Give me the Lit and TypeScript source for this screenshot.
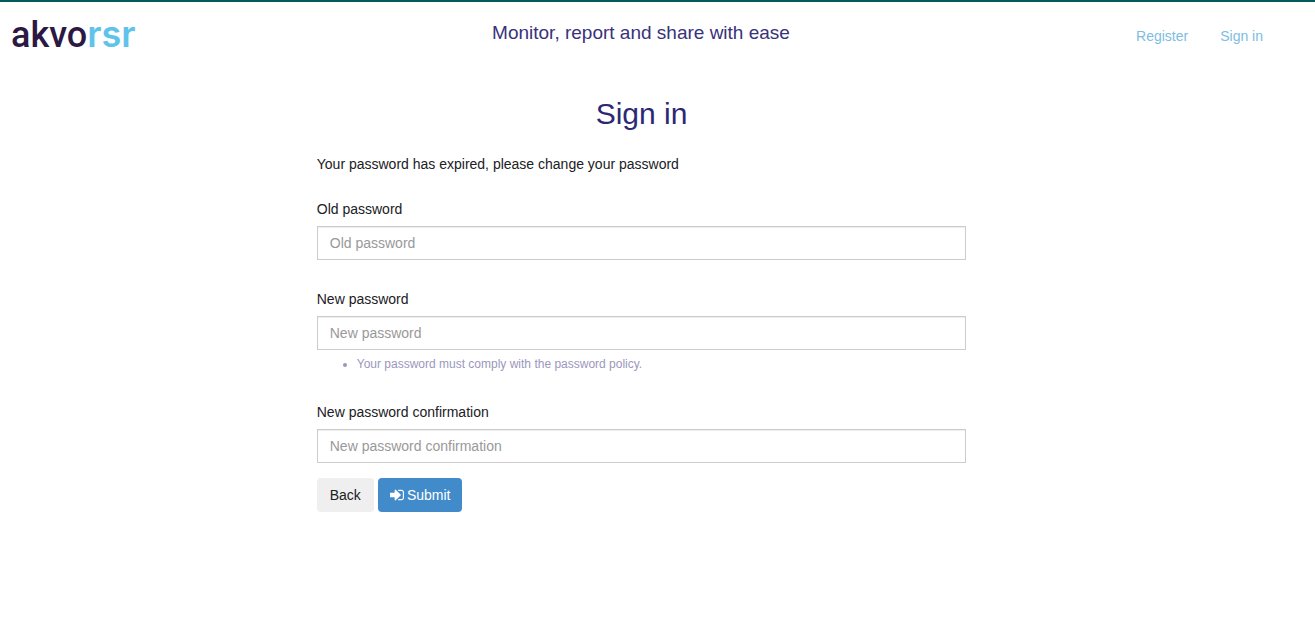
import { LitElement, html, css } from "lit";
import { customElement } from "lit/decorators.js";

@customElement("password-field")
class PasswordField extends LitElement {
  static properties = { label: {}, hint: {} };
  declare label: string;
  declare hint: string;

  static styles = css`
    :host {
      display: block;
    }
    .label {
      display: block;
      margin-bottom: 7px;
      line-height: 20px;
    }
    .input {
      display: block;
      box-sizing: border-box;
      width: 100%;
      height: 34px;
      padding: 6px 12px;
      border: 1px solid #ccc;
      border-radius: 0;
      background: #fff;
      box-shadow: inset 0 1px 1px rgba(0, 0, 0, 0.075);
      font: inherit;
      color: #555;
    }
    .input::placeholder {
      color: #999;
      opacity: 1;
    }
    .hints {
      margin: 4px 0 -1px;
      padding-left: 40px;
      font-size: 12px;
      line-height: 20px;
      color: #9b97bd;
    }
  `;

  render() {
    return html`
      <label class="label" for="field">${this.label}</label>
      <input class="input" id="field" type="password" placeholder=${this.label} />
      ${this.hint ? html`<ul class="hints"><li>${this.hint}</li></ul>` : null}
    `;
  }
}

@customElement("app-root")
class AppRoot extends LitElement {
  static styles = css`
    :host {
      display: block;
      border-top: 2px solid #04595b;
      background: #fff;
      font-family: "Liberation Sans", Arial, sans-serif;
      font-size: 14px;
      line-height: 20px;
      color: #202024;
    }
    .header {
      display: grid;
      grid-template-columns: 1fr auto 1fr;
      align-items: center;
      height: 68px;
      padding: 0 44px 0 11px;
    }
    .logo {
      justify-self: start;
      margin-bottom: 4px;
      font-family: Roboto, "Liberation Sans", sans-serif;
      font-size: 36px;
      line-height: 40px;
      font-weight: 500;
      color: #2c1845;
      text-decoration: none;
    }
    .product {
      font-family: Inter, "Liberation Sans", sans-serif;
      font-weight: 600;
      color: #5fc3ea;
    }
    .tagline {
      margin: 0 0 6px;
      font-size: 19px;
      line-height: 24px;
      color: #39327c;
    }
    .nav {
      display: flex;
      justify-self: end;
      gap: 32px;
      padding-right: 8px;
    }
    .link {
      color: #7dbde0;
      text-decoration: none;
    }
    .main {
      padding: 24px 32px 0 0;
    }
    .form {
      display: flex;
      flex-direction: column;
      gap: 29px;
      width: calc(50% + 8px);
      margin: 0 auto;
    }
    .title {
      margin: 0;
      font-size: 30px;
      line-height: 40px;
      font-weight: 400;
      text-align: center;
      color: #2c2874;
    }
    .intro {
      display: grid;
      gap: 20px;
      margin-bottom: -4px;
    }
    .message {
      margin: 0;
    }
    .actions {
      display: flex;
      gap: 4px;
      margin-top: -14px;
    }
    .button {
      display: flex;
      align-items: center;
      gap: 3px;
      height: 34px;
      padding: 0 13px;
      border: 0;
      border-radius: 4px;
      background: #efefef;
      font: inherit;
      color: #202024;
    }
    .primary {
      padding: 0 12px;
      background: #428bca;
      color: #fff;
    }
    .icon {
      width: 14px;
      height: 14px;
      fill: currentColor;
    }
  `;

  render() {
    return html`
      <header class="header">
        <a class="logo" href="#">akvo<span class="product">rsr</span></a>
        <p class="tagline">Monitor, report and share with ease</p>
        <nav class="nav">
          <a class="link" href="#register">Register</a>
          <a class="link" href="#sign-in">Sign in</a>
        </nav>
      </header>
      <main class="main">
        <form class="form">
          <div class="intro">
            <h1 class="title">Sign in</h1>
            <p class="message">Your password has expired, please change your password</p>
          </div>
          <password-field label="Old password"></password-field>
          <password-field
            label="New password"
            hint="Your password must comply with the password policy."
          ></password-field>
          <password-field label="New password confirmation"></password-field>
          <div class="actions">
            <button class="button" type="button">Back</button>
            <button class="button primary" type="submit">
              <svg class="icon" viewBox="0 0 1536 1536" aria-hidden="true">
                <path d="M1184 768q0 26-19 45l-544 544q-19 19-45 19t-45-19-19-45v-288H64q-26 0-45-19T0 960V576q0-26 19-45t45-19h448V224q0-26 19-45t45-19 45 19l544 544q19 19 19 45zM1536 480v576q0 119-84.500 203.500T1248 1344H928q-13 0-22.500-9.500T896 1312q0-4-1-20t-.5-26.500 3-23.500 10-19.500 20.500-6.500h320q66 0 113-47t47-113V480q0-66-47-113t-113-47H936l-11.500-1-11.500-3-8-5.500-7-9-2-13.500q0-4-1-20t-.5-26.500 3-23.500 10-19.500 20.500-6.500h320q119 0 203.500 84.500T1536 480z" />
              </svg>
              Submit
            </button>
          </div>
        </form>
      </main>
    `;
  }
}
